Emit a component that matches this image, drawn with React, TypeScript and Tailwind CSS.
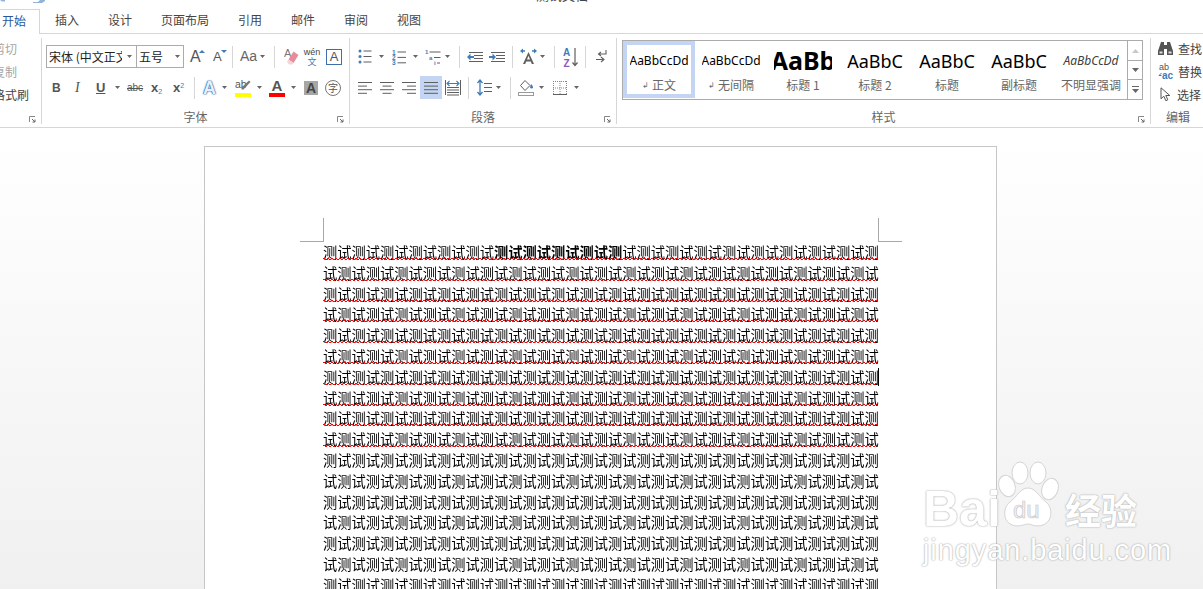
import React from 'react';

const CJK = "font-['Noto_Sans_CJK_SC','Noto_Sans',sans-serif]";
const BLUE = '#3f7cb8';
const GRAY = '#5f5f5f';

function Caret({ className = '' }: { className?: string }) {
  return (
    <svg width="5" height="3" viewBox="0 0 5 3" className={`shrink-0 ${className}`}>
      <path d="M0 0h5L2.5 3z" fill="#666" />
    </svg>
  );
}

function Sep({ className = '' }: { className?: string }) {
  return <div className={`h-[22px] w-px shrink-0 bg-[#d6d6d6] ${className}`} />;
}

function Launcher() {
  return (
    <svg width="7" height="7" viewBox="0 0 7 7" className="absolute right-[5px] bottom-[1px]">
      <path d="M0.5 6V0.5H6" fill="none" stroke="#888" />
      <path d="M3 3l3 3M6 3.5V6H3.5" fill="none" stroke="#666" />
    </svg>
  );
}

function Group({ label, className, children }: { label: string; className: string; children: React.ReactNode }) {
  return (
    <div className={`relative flex h-[86px] shrink-0 flex-col border-r border-[#d6d6d6] ${className}`}>
      {children}
      <div className={`mt-auto -mb-[2px] h-[18px] text-center text-[12px] leading-[18px] text-[#666] ${CJK}`}>{label}</div>
    </div>
  );
}

function Lines({ rows, className = '' }: { rows: [number, number][]; className?: string }) {
  return (
    <svg width="14" height="14" viewBox="0 0 14 14" className={`shrink-0 ${className}`}>
      {rows.map(([a, b], i) => (
        <rect key={i} x={a} y={1 + i * 3.6} width={b - a} height="1" fill={GRAY} />
      ))}
    </svg>
  );
}

function Bullets({ className }: { className: string }) {
  return (
    <svg width="14" height="15" viewBox="0 0 14 15" className={`shrink-0 ${className}`}>
      {[2, 7.5, 13].map((y) => (
        <g key={y}>
          <circle cx="2" cy={y} r="1.5" fill={BLUE} />
          <rect x="5.5" y={y - 0.5} width="8" height="1" fill={GRAY} />
        </g>
      ))}
    </svg>
  );
}

function Numbers({ className }: { className: string }) {
  return (
    <svg width="14" height="16" viewBox="0 0 14 16" className={`shrink-0 ${className}`}>
      {['1', '2', '3'].map((n, i) => (
        <g key={n}>
          <text x="0" y={5.5 + i * 5.4} fontSize="6.5" fontWeight="700" fill={BLUE} fontFamily="Liberation Sans">{n}</text>
          <rect x="5.5" y={2.5 + i * 5.4} width="8.5" height="1" fill={GRAY} />
        </g>
      ))}
    </svg>
  );
}

function Multi({ className }: { className: string }) {
  return (
    <svg width="16" height="16" viewBox="0 0 16 16" className={`shrink-0 ${className}`}>
      <text x="0" y="5" fontSize="6" fontWeight="700" fill={BLUE} fontFamily="Liberation Sans">1</text>
      <rect x="4.5" y="2.5" width="11" height="1" fill={GRAY} />
      <text x="4" y="10.5" fontSize="6" fontWeight="700" fill={BLUE} fontFamily="Liberation Sans">a</text>
      <rect x="9" y="8" width="6.5" height="1" fill={GRAY} />
      <text x="9" y="16" fontSize="6" fontWeight="700" fill={BLUE} fontFamily="Liberation Sans">i</text>
      <rect x="12" y="13.5" width="3" height="1" fill={GRAY} />
    </svg>
  );
}

function Indent({ dir, className }: { dir: 'in' | 'out'; className: string }) {
  return (
    <svg width="16" height="12" viewBox="0 0 16 12" className={`shrink-0 ${className}`}>
      {[1, 4, 7, 10].map((y, i) => (
        <rect key={y} x={i === 1 || i === 2 ? 7 : 2} y={y} width={i === 1 || i === 2 ? 9 : 14} height="1" fill={GRAY} />
      ))}
      {dir === 'out' ? (
        <path d="M0 6l3.5-3.5V5H7v2H3.5v2.5z" fill={BLUE} />
      ) : (
        <path d="M7 6L3.5 2.5V5H0v2h3.5v2.5z" fill={BLUE} />
      )}
    </svg>
  );
}

function Asian({ className }: { className: string }) {
  return (
    <svg width="17" height="17" viewBox="0 0 17 17" className={`shrink-0 ${className}`}>
      <path d="M0 3l3-2.5v1.8h2v1.4H3v1.8zM17 3l-3-2.5v1.8h-2v1.4h2v1.8z" fill={BLUE} />
      <path d="M8.5 4L3 16h2.2l1-2.5h4.6l1 2.5H14zM7 11.6l1.5-3.8 1.5 3.8z" fill={GRAY} />
    </svg>
  );
}

function Sort({ className }: { className: string }) {
  return (
    <svg width="15" height="20" viewBox="0 0 15 20" className={`shrink-0 ${className}`}>
      <text x="0" y="9" fontSize="10" fontWeight="700" fill={BLUE} fontFamily="Liberation Sans">A</text>
      <text x="0.5" y="19.5" fontSize="10" fontWeight="700" fill="#8e5bb5" fontFamily="Liberation Sans">Z</text>
      <path d="M12 1v17M9.5 15.5L12 18.5l2.5-3" fill="none" stroke={GRAY} strokeWidth="1.2" />
    </svg>
  );
}

function Marks({ className }: { className: string }) {
  return (
    <svg width="11" height="13" viewBox="0 0 11 13" className={`shrink-0 ${className}`}>
      <path d="M10 0v4H3M5 2L2.5 4 5 6" fill="none" stroke={GRAY} strokeWidth="1.1" />
      <path d="M0 9.5h7M5 7l3 2.5L5 12" fill="none" stroke={GRAY} strokeWidth="1.1" />
    </svg>
  );
}

function Distributed({ className }: { className: string }) {
  return (
    <svg width="16" height="16" viewBox="0 0 16 16" className={`shrink-0 ${className}`}>
      <path d="M0.5 0v15M15.5 0v15" stroke={GRAY} />
      <path d="M2 3.5h12M4.5 1L2 3.5 4.5 6M11.5 1L14 3.5 11.5 6" fill="none" stroke={BLUE} strokeWidth="1.1" />
      {[7, 9.5, 12, 14.5].map((y) => (
        <rect key={y} x="2" y={y} width="12" height="1" fill={GRAY} />
      ))}
    </svg>
  );
}

function Spacing({ className }: { className: string }) {
  return (
    <svg width="15" height="17" viewBox="0 0 15 17" className={`shrink-0 ${className}`}>
      <path d="M3 1v15M0.5 4L3 1l2.5 3M0.5 13L3 16l2.5-3" fill="none" stroke={BLUE} strokeWidth="1.3" />
      {[4, 8, 12].map((y) => (
        <rect key={y} x="7" y={y} width="8" height="1" fill={GRAY} />
      ))}
    </svg>
  );
}

function Shading({ className }: { className: string }) {
  return (
    <svg width="16" height="16" viewBox="0 0 16 16" className={`shrink-0 ${className}`}>
      <path d="M7 0.5l-4.5 5 4.5 5 5-5z" fill="#fff" stroke={GRAY} />
      <path d="M13 4c1.5 1.5 2 2.5 2 3.2a1.4 1.4 0 0 1-2.8 0C12.2 6.5 12.5 5.5 13 4z" fill={BLUE} />
      <rect x="0.5" y="12.5" width="15" height="3" fill="#fff" stroke="#9a9a9a" />
    </svg>
  );
}

function Borders({ className }: { className: string }) {
  return (
    <svg width="14" height="14" viewBox="0 0 14 14" className={`shrink-0 ${className}`}>
      <path d="M0.5 0v13M7 0v13M13.5 0v13M0 0.5h14M0 7h14" fill="none" stroke="#888" strokeDasharray="1 1" />
      <path d="M0 13.5h14" stroke={GRAY} />
    </svg>
  );
}

function Eraser({ className }: { className: string }) {
  return (
    <svg width="15" height="17" viewBox="0 0 15 17" className={`shrink-0 ${className}`}>
      <text x="0" y="9" fontSize="11" fill="#777" fontFamily="Liberation Sans">A</text>
      <path d="M9.5 3.5l5 3.5-5 8-5-3.5z" fill="#e88b9b" />
      <path d="M4.5 11.5l5 3.5-1.2 1.5H5L3 13.8z" fill="#f6d3d9" />
    </svg>
  );
}

function Pen() {
  return (
    <svg width="16" height="14" viewBox="0 0 16 14" className="shrink-0">
      <text x="0" y="9" fontSize="10.5" fill="#555" fontFamily="Liberation Sans">ab</text>
      <path d="M14 1.5l1.5 1.5-7 7.5H6.5v-2z" fill="#777" />
    </svg>
  );
}

function Binoculars() {
  return (
    <svg width="15" height="13" viewBox="0 0 15 13" className="shrink-0">
      <path d="M3 0h3v3h3V0h3l3 9v4H9V7H6v6H0V9z" fill="#555" />
      <path d="M1.5 9.5h3v2h-3zM10.5 9.5h3v2h-3z" fill="#ddd" />
    </svg>
  );
}

function Replace() {
  return (
    <svg width="16" height="17" viewBox="0 0 16 17" className="shrink-0">
      <text x="1" y="7" fontSize="9" fill="#555" fontFamily="Liberation Sans">ab</text>
      <text x="4" y="16" fontSize="10" fontWeight="700" fill={BLUE} fontFamily="Liberation Sans">ac</text>
      <path d="M3.5 10L1 12.5h2.5" fill="none" stroke={BLUE} />
    </svg>
  );
}

function Pointer() {
  return (
    <svg width="11" height="15" viewBox="0 0 11 15" className="ml-[2px] mr-[2px] shrink-0">
      <path d="M1 0.8v11l2.8-2.6 2 4.5 2-.9-2-4.3h4z" fill="#fff" stroke="#555" />
    </svg>
  );
}

const styles = [
  { sample: 'AaBbCcDd', name: '正文', mark: true, cls: 'text-[12px]' },
  { sample: 'AaBbCcDd', name: '无间隔', mark: true, cls: 'text-[12px]' },
  { sample: 'AaBb', name: '标题 1', cls: 'text-[25px] font-bold' },
  { sample: 'AaBbC', name: '标题 2', cls: 'text-[18px]' },
  { sample: 'AaBbC', name: '标题', cls: 'text-[18px]' },
  { sample: 'AaBbC', name: '副标题', cls: 'text-[18px]' },
  { sample: 'AaBbCcDd', name: '不明显强调', cls: 'text-[12px] italic text-[#404040]' },
];

function Gallery() {
  return (
    <div className="mt-[2px] ml-[5px] flex h-[60px] w-[521px] border border-[#ababab]">
      {styles.map((s, i) => (
        <div
          key={i}
          className={`flex h-[57px] w-[72px] shrink-0 flex-col items-center overflow-hidden ${i === 0 ? 'border-[4px] border-[#c3d5f2]' : 'border-[4px] border-transparent'}`}
        >
          <div className={`flex h-[31px] w-[58px] items-center justify-center overflow-hidden whitespace-nowrap font-['Noto_Sans',sans-serif] leading-none ${s.cls}`}>
            {s.sample}
          </div>
          <div className={`flex h-[18px] items-center gap-[3px] whitespace-nowrap text-[12px] leading-[18px] text-[#666] ${CJK}`}>
            {s.mark && <span className="text-[8px]">↲</span>}
            {s.name}
          </div>
        </div>
      ))}
      <div className="flex w-[15px] shrink-0 flex-col border-l border-[#ababab]">
        <div className="flex h-[20px] items-center justify-center border-b border-[#ababab]">
          <svg width="7" height="4" viewBox="0 0 7 4"><path d="M0 4h7L3.5 0z" fill="#c8c8c8" /></svg>
        </div>
        <div className="flex h-[19px] items-center justify-center border-b border-[#ababab]">
          <svg width="7" height="4" viewBox="0 0 7 4"><path d="M0 0h7L3.5 4z" fill="#666" /></svg>
        </div>
        <div className="flex flex-1 flex-col items-center justify-center gap-[2px]">
          <div className="h-px w-[7px] bg-[#666]" />
          <svg width="7" height="4" viewBox="0 0 7 4"><path d="M0 0h7L3.5 4z" fill="#666" /></svg>
        </div>
      </div>
    </div>
  );
}

function FontGroup() {
  return (
    <Group label="字体" className="w-[308px]">
      <div className="mt-[7px] flex h-[23px] items-center">
        <div className={`ml-[4px] flex h-[23px] w-[91px] items-center overflow-hidden border border-[#ababab] pl-[2px] text-[12px] whitespace-nowrap text-[#222] ${CJK}`}>
          <span className="w-[73px] overflow-hidden">宋体 (中文正文)</span>
          <Caret className="ml-[5px]" />
        </div>
        <div className={`flex h-[23px] w-[47px] items-center border border-l-0 border-[#ababab] pl-[2px] text-[12px] text-[#222] ${CJK}`}>
          五号
          <Caret className="ml-[12px]" />
        </div>
        <div className="ml-[6px] flex w-[14px] items-start text-[16px] leading-none text-[#555] font-['Liberation_Sans']">
          A<span className="mt-[1px] -ml-[2px] h-0 w-0 border-x-[3px] border-b-[3px] border-x-transparent border-b-[#3f7cb8]" />
        </div>
        <div className="ml-[9px] flex w-[14px] items-start text-[13px] leading-none text-[#555] font-['Liberation_Sans']">
          A<span className="-ml-[1px] h-0 w-0 border-x-[3px] border-t-[3px] border-x-transparent border-t-[#3f7cb8]" />
        </div>
        <Sep className="ml-[5px]" />
        <span className="ml-[7px] w-[16px] text-[14px] whitespace-nowrap text-[#666] font-['Liberation_Sans']">Aa</span>
        <Caret className="ml-[4px]" />
        <Sep className="ml-[9px]" />
        <Eraser className="ml-[9px]" />
        <div className="ml-[5px] flex w-[16px] flex-col items-center leading-none">
          <span className="text-[9px] text-[#444] font-['Liberation_Sans']">wén</span>
          <span className={`text-[9px] text-[#3f7cb8] ${CJK}`}>文</span>
        </div>
        <div className="ml-[6px] flex h-[16px] w-[16px] items-center justify-center border border-[#3f6fa8] text-[13px] leading-none text-[#555] font-['Liberation_Sans']">A</div>
      </div>
      <div className="mt-[8px] flex h-[23px] items-center font-['Liberation_Sans'] text-[#555]">
        <span className="ml-[10px] w-[9px] text-[12px] font-bold">B</span>
        <span className="ml-[14px] w-[8px] font-['Liberation_Serif'] text-[14px] italic">I</span>
        <span className="ml-[13px] w-[10px] text-[13px] font-bold underline">U</span>
        <Caret className="ml-[9px]" />
        <span className="ml-[7px] w-[17px] text-[10px] whitespace-nowrap line-through">abc</span>
        <span className="ml-[7px] w-[13px] text-[13px] font-bold">x<sub className="text-[7px] font-normal text-[#3f7cb8]">2</sub></span>
        <span className="ml-[9px] w-[13px] text-[13px] font-bold">x<sup className="text-[7px] font-normal text-[#3f7cb8]">2</sup></span>
        <Sep className="ml-[8px]" />
        <span className="ml-[8px] w-[14px] text-[18px] leading-none font-bold text-[#e8f0fa] [text-shadow:0_0_1px_#1f62ad,0_0_1px_#1f62ad,0_0_2px_#2f6fb5]">A</span>
        <Caret className="ml-[5px]" />
        <div className="ml-[8px] flex w-[16px] flex-col items-center">
          <Pen />
          <span className="h-[4px] w-[16px] bg-[#ffff00]" />
        </div>
        <Caret className="ml-[6px]" />
        <div className="ml-[7px] flex w-[16px] flex-col items-center">
          <span className="h-[14px] text-[15px] leading-[14px] font-bold text-[#555]">A</span>
          <span className="h-[4px] w-[16px] bg-[#ff0000]" />
        </div>
        <Caret className="ml-[6px]" />
        <span className="ml-[8px] flex h-[14px] w-[14px] items-center justify-center bg-[#a6a6a6] text-[14px] leading-none font-bold text-[#444]">A</span>
        <span className={`ml-[7px] flex h-[16px] w-[16px] items-center justify-center rounded-full border border-[#777] text-[10px] leading-none text-[#555] ${CJK}`}>字</span>
      </div>
      <Launcher />
    </Group>
  );
}

function ParagraphGroup() {
  return (
    <Group label="段落" className="w-[267px]">
      <div className="mt-[7px] flex h-[23px] items-center">
        <Bullets className="ml-[8px]" />
        <Caret className="ml-[7px]" />
        <Numbers className="ml-[8px]" />
        <Caret className="ml-[7px]" />
        <Multi className="ml-[7px]" />
        <Caret className="ml-[4px]" />
        <Sep className="ml-[9px]" />
        <Indent dir="out" className="ml-[7px]" />
        <Indent dir="in" className="ml-[6px]" />
        <Sep className="ml-[7px]" />
        <Asian className="ml-[7px]" />
        <Caret className="ml-[3px]" />
        <Sep className="ml-[9px]" />
        <Sort className="ml-[8px]" />
        <Sep className="ml-[7px]" />
        <Marks className="ml-[10px]" />
      </div>
      <div className="mt-[8px] flex h-[23px] items-center">
        <Lines className="ml-[8px]" rows={[[0, 14], [0, 9], [0, 14], [0, 9]]} />
        <Lines className="ml-[8px]" rows={[[0, 14], [2.5, 11.5], [0, 14], [2.5, 11.5]]} />
        <Lines className="ml-[8px]" rows={[[0, 14], [5, 14], [0, 14], [5, 14]]} />
        <div className="ml-[4px] flex h-[23px] w-[22px] items-center justify-center bg-[#c3d5f2]">
          <Lines rows={[[0, 14], [0, 14], [0, 14], [0, 14]]} />
        </div>
        <Distributed className="ml-[3px]" />
        <Sep className="ml-[7px]" />
        <Spacing className="ml-[8px]" />
        <Caret className="ml-[4px]" />
        <Sep className="ml-[9px]" />
        <Shading className="ml-[7px]" />
        <Caret className="ml-[5px]" />
        <Borders className="ml-[9px]" />
        <Caret className="ml-[7px]" />
      </div>
      <Launcher />
    </Group>
  );
}

function Ribbon() {
  return (
    <div className="flex h-[94px] shrink-0 items-start border-b border-[#d6d6d6] bg-white pt-[4px]">
      <Group label="" className="w-[42px]">
        <div className={`-mt-[1px] -ml-[7px] flex flex-col text-[12px] leading-[23px] whitespace-nowrap ${CJK}`}>
          <span className="text-[#a6a6a6]">剪切</span>
          <span className="text-[#a6a6a6]">复制</span>
          <span className="text-[#444]">格式刷</span>
        </div>
        <Launcher />
      </Group>
      <FontGroup />
      <ParagraphGroup />
      <Group label="样式" className="w-[534px]">
        <Gallery />
        <Launcher />
      </Group>
      <Group label="编辑" className="w-[52px] border-r-0 pl-[2px]">
        <div className={`-mt-[1px] flex flex-col pl-[5px] text-[12px] leading-[23px] whitespace-nowrap text-[#444] ${CJK}`}>
          <div className="flex h-[23px] items-center gap-[5px]"><Binoculars />查找</div>
          <div className="flex h-[23px] items-center gap-[4px]"><Replace />替换</div>
          <div className="flex h-[23px] items-center gap-[4px]"><Pointer />选择</div>
        </div>
      </Group>
    </div>
  );
}

const CHAR_COUNT = 39;

function lineText(i: number) {
  let out = '';
  for (let c = 0; c < CHAR_COUNT; c++) out += (c + i) % 2 === 0 ? '测' : '试';
  return out;
}

function DocLine({ index }: { index: number }) {
  const text = lineText(index);
  return (
    <div className="relative h-[20.8px] leading-[20.8px] whitespace-nowrap">
      {index === 0 ? (
        <>
          {text.slice(0, 12)}
          <span className="font-bold">{text.slice(12, 21)}</span>
          {text.slice(21)}
        </>
      ) : (
        text
      )}
      {index < 10 && (
        <span className="absolute top-[16px] left-0 h-px w-[555px] bg-[repeating-linear-gradient(90deg,#f00_0_2px,transparent_2px_4px)]">
          <span className="absolute top-px left-[2px] h-px w-[553px] bg-[repeating-linear-gradient(90deg,#f00_0_2px,transparent_2px_4px)]" />
        </span>
      )}
      {index === 6 && <span className="absolute top-[1px] left-[555px] h-[18px] w-px bg-black" />}
    </div>
  );
}

function Watermark() {
  const glow = '[text-shadow:0_0_2px_#a8a8a8,0_0_1px_#b8b8b8]';
  return (
    <div className="absolute top-[460px] left-[923px] h-[105px] w-[216px] text-white">
      <svg width="62" height="70" viewBox="0 0 62 70" className="absolute top-0 left-[74px]">
        <g fill="#fff" stroke="#d4d4d4" strokeWidth="1">
          <ellipse cx="10" cy="26" rx="8" ry="11" transform="rotate(-20 10 26)" />
          <ellipse cx="23" cy="13" rx="8" ry="11" />
          <ellipse cx="41" cy="13" rx="8" ry="11" />
          <ellipse cx="53" cy="29" rx="8" ry="11" transform="rotate(20 53 29)" />
          <path d="M31 28c8 0 11 9 18 14 7 5 8 23-8 24-5 0-7-2-10-2s-6 2-11 2c-15-1-15-18-7-24 7-5 10-14 18-14z" />
        </g>
        <text x="16" y="58" fontSize="24" fontFamily="Liberation Sans" fill="#f4f4f4" stroke="#c8c8c8" strokeWidth="0.7">du</text>
      </svg>
      <div className="absolute top-[24px] left-0 flex w-[216px] items-center justify-between">
        <span className={`font-['Liberation_Sans'] text-[50px] leading-[50px] font-bold ${glow}`}>Bai</span>
        <span className={`mr-[2px] text-[36px] leading-[50px] font-bold ${CJK} ${glow}`}>经验</span>
      </div>
      <div className={`absolute top-[74px] left-0 font-['Liberation_Sans'] text-[29px] leading-[32px] tracking-[0.9px] whitespace-nowrap ${glow}`}>
        jingyan.baidu.com
      </div>
    </div>
  );
}

export default function App() {
  const tabs = ['插入', '设计', '页面布局', '引用', '邮件', '审阅', '视图'];
  return (
    <div className={`relative flex h-[589px] w-[1203px] flex-col overflow-hidden bg-white ${CJK}`}>
      <div className="flex h-[9px] shrink-0 overflow-hidden text-[13px] leading-[14px] text-[#444]">
        <svg width="46" height="3" viewBox="0 0 46 3" className="shrink-0">
          <path d="M0 0h5v1.5H2zM33 2h5l2-2h5v1l-3 2h-9z" fill="#8fb3d9" />
        </svg>
        <div className="-mt-[12px] ml-[490px]">测试文档.docx</div>
      </div>
      <div className="flex h-[25px] shrink-0 border-b border-[#d6d6d6] bg-white text-[12px] text-[#444]">
        <div className="h-[25px] w-[40px] border-t border-r border-[#d6d6d6] bg-white pl-[2px] leading-[22px] text-[#2b579a]">开始</div>
        <div className="ml-[15px] flex gap-[29px] leading-[22px]">
          {tabs.map((t) => (
            <span key={t}>{t}</span>
          ))}
        </div>
      </div>
      <Ribbon />
      <div className="min-h-0 flex-1 overflow-hidden bg-linear-to-b from-white to-[#f0f0f0] pt-[18px]">
        <div className="ml-[204px] h-[600px] w-[793px] border-x border-t border-[#c6c6c6] bg-white pt-[71px]">
          <div className="ml-[95px] flex h-[24px] w-[602px] justify-between">
            <div className="h-[24px] w-[24px] border-r border-b border-[#a8a8a8]" />
            <div className="h-[24px] w-[24px] border-b border-l border-[#a8a8a8]" />
          </div>
          <div className="ml-[118px] w-[556px] text-[14.25px] text-black will-change-transform">
            {Array.from({ length: 17 }, (_, i) => (
              <DocLine key={i} index={i} />
            ))}
          </div>
        </div>
      </div>
      <Watermark />
    </div>
  );
}
